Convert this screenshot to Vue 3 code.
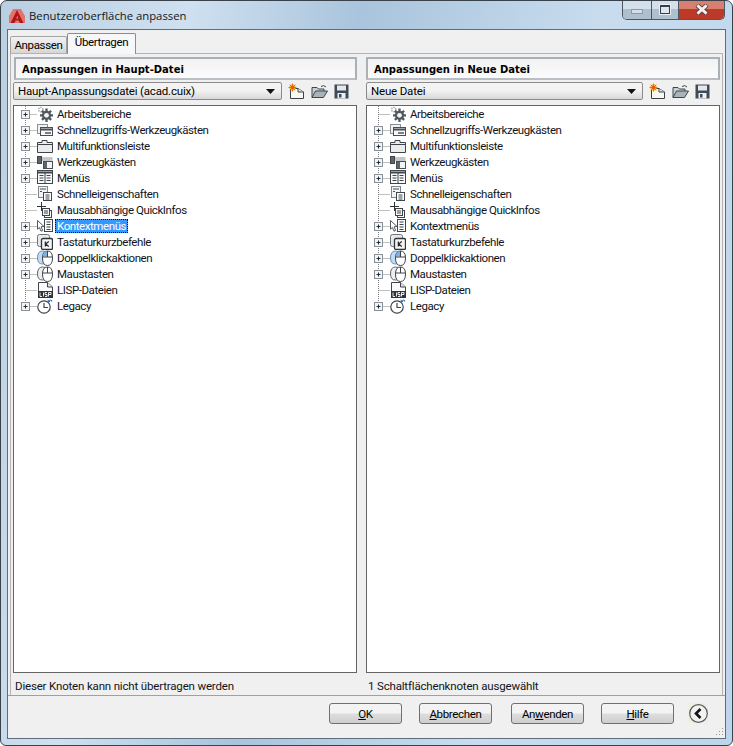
<script setup>
const items = [
  { t: 'Arbeitsbereiche', i: 'gear', x: true },
  { t: 'Schnellzugriffs-Werkzeugkästen', i: 'quick', x: true },
  { t: 'Multifunktionsleiste', i: 'ribbon', x: true },
  { t: 'Werkzeugkästen', i: 'tools', x: true },
  { t: 'Menüs', i: 'menu', x: true },
  { t: 'Schnelleigenschaften', i: 'props', x: false },
  { t: 'Mausabhängige QuickInfos', i: 'tip', x: false },
  { t: 'Kontextmenüs', i: 'context', x: true },
  { t: 'Tastaturkurzbefehle', i: 'key', x: true },
  { t: 'Doppelklickaktionen', i: 'dbl', x: true },
  { t: 'Maustasten', i: 'mouse', x: true },
  { t: 'LISP-Dateien', i: 'lisp', x: false },
  { t: 'Legacy', i: 'legacy', x: true }
]
const panels = [
  { title: 'Anpassungen in Haupt-Datei', combo: 'Haupt-Anpassungsdatei (acad.cuix)', status: 'Dieser Knoten kann nicht übertragen werden', sel: 'Kontextmenüs', noExpand: [], cls: 'left' },
  { title: 'Anpassungen in Neue Datei', combo: 'Neue Datei', status: '1 Schaltflächenknoten ausgewählt', sel: '', noExpand: ['Arbeitsbereiche'], cls: 'right' }
]
function hasBox(p, it) {
  return it.x && !p.noExpand.includes(it.t)
}
</script>

<template>
  <div class="window">
    <header class="titlebar">
      <svg class="logo" width="16" height="16" viewBox="0 0 16 16">
        <path d="M0 15 L0 8 L4 1 H12 L16 8 V15 Z" fill="#e2746f" />
        <path d="M1.5 15 L8 2 L14.5 15 L10.8 15 L9.8 12.5 L6.6 12.5 L5.5 15 Z" fill="#b01818" />
        <path d="M7.4 10.5 L9.2 10.5 L8.3 7.8 Z" fill="#e9a0a0" />
      </svg>
      <span class="title-text">Benutzeroberfläche anpassen</span>
      <div class="caption-btns">
        <div class="cap cap-min"><span class="min-glyph"></span></div>
        <div class="cap cap-max"><span class="max-glyph"></span></div>
        <div class="cap cap-close">
          <svg width="14" height="11" viewBox="0 0 14 11">
            <path d="M2 1 L12 10 M12 1 L2 10" stroke="#56393a" stroke-width="4.4" />
            <path d="M2.4 1.4 L11.6 9.6 M11.6 1.4 L2.4 9.6" stroke="#f4eeee" stroke-width="2.8" />
          </svg>
        </div>
      </div>
    </header>

    <div class="client">
      <div class="tabs">
        <div class="tab">Anpassen</div>
        <div class="tab active">Übertragen</div>
      </div>
      <div class="pane">
        <section v-for="p in panels" :key="p.cls" class="col">
          <div class="head">{{ p.title }}</div>
          <div class="toolbar">
            <div class="combo" :class="p.cls">
              <span>{{ p.combo }}</span>
              <svg class="arrow" width="9" height="5" viewBox="0 0 9 5"><path d="M0 0 H9 L4.5 5 Z" fill="#111" /></svg>
            </div>
            <svg class="tb" width="17" height="17" viewBox="0 0 17 17">
              <path d="M2.5 5.5 H10 L15.5 9 V15.5 H2.5 Z" fill="#fbf8ee" stroke="#39424c" />
              <path d="M10 5.5 V9 H15.5" fill="#dfe3e6" stroke="#39424c" />
              <circle cx="4.5" cy="4.5" r="3.2" fill="#f3b51c" />
              <circle cx="4.5" cy="4.5" r="1.5" fill="#e43a12" />
              <path d="M4.5 .5 V8.5 M.5 4.5 H8.5 M1.7 1.7 L7.3 7.3 M7.3 1.7 L1.7 7.3" stroke="#e8590f" stroke-width=".8" />
            </svg>
            <svg class="tb" width="17" height="17" viewBox="0 0 17 17">
              <path d="M1 14.5 V4.5 H6 L7.5 6 H13 V8" fill="#c8ced2" stroke="#3d464e" />
              <path d="M1 14.5 L4.5 8 H16.5 L12.5 14.5 Z" fill="#a9b4ba" stroke="#3d464e" />
              <path d="M10 3.5 Q13 1.5 15 4" fill="none" stroke="#3d464e" />
            </svg>
            <svg class="tb" width="15" height="15" viewBox="0 0 15 15">
              <path d="M.5 .5 H14.5 V14.5 H.5 Z" fill="#3e4a57" />
              <rect x="3" y="1.5" width="9" height="5" fill="#e4e8ea" />
              <rect x="3.5" y="9" width="8" height="5.5" fill="#eef0f1" />
              <rect x="5" y="10" width="2.5" height="3.5" fill="#3e4a57" />
            </svg>
          </div>
          <div class="tree">
            <div v-for="(it, n) in items" :key="it.t" class="row">
              <svg class="gutter" width="23" height="16" viewBox="0 0 23 16">
                <path :d="n === items.length - 1 ? 'M11.5 0 V8' : 'M11.5 0 V16'" stroke="#808080" stroke-dasharray="1 1" fill="none" />
                <path d="M11.5 8.5 H23" stroke="#808080" stroke-dasharray="1 1" fill="none" />
                <template v-if="hasBox(p, it)">
                  <rect x="7.5" y="4.5" width="8" height="8" fill="#f4f4f0" stroke="#8a9099" />
                  <path d="M9.5 8.5 H13.5 M11.5 6.5 V10.5" stroke="#1f2a44" />
                </template>
              </svg>
              <svg class="ico" width="16" height="16" viewBox="0 0 16 16">
                <template v-if="it.i === 'gear'">
                  <circle cx="3.8" cy="3.6" r="2.2" fill="none" stroke="#a2a7ac" stroke-width="1.4" stroke-dasharray="1.4 .8" />
                  <path d="M9.5 2.6 V15.9 M3 9.3 H16 M4.9 4.7 L14.1 13.9 M14.1 4.7 L4.9 13.9" stroke="#50585f" stroke-width="2.3" />
                  <circle cx="9.5" cy="9.3" r="4.6" fill="#50585f" />
                  <circle cx="9.5" cy="9.3" r="2.4" fill="#f4f4f4" />
                </template>
                <template v-else-if="it.i === 'quick'">
                  <rect x=".5" y="2.5" width="10" height="9" fill="#f2f2f2" stroke="#8b9095" />
                  <rect x="3.5" y="5.5" width="12" height="8" fill="#f7f7f7" stroke="#4a4f55" />
                  <path d="M4 7.5 H15" stroke="#4a4f55" stroke-width="2" />
                  <rect x="8" y="10" width="6" height="2" fill="#77808a" />
                </template>
                <template v-else-if="it.i === 'ribbon'">
                  <path d="M.5 14.5 V4.5 H5 V2.5 H10 V4.5 H15.5 V14.5 Z" fill="#ececec" stroke="#3f454b" />
                  <path d="M1 6.5 H15" stroke="#3f454b" />
                </template>
                <template v-else-if="it.i === 'tools'">
                  <rect x=".5" y="2.5" width="4" height="7" fill="#5d646b" stroke="#3f454b" />
                  <path d="M5 4 H15.5 M5 6 H15.5" stroke="#8a9095" />
                  <rect x="6.5" y="7.5" width="9" height="7" fill="#f3f3f3" stroke="#4a4f55" />
                  <rect x="7" y="8" width="3" height="6" fill="#5d646b" />
                </template>
                <template v-else-if="it.i === 'menu'">
                  <rect x=".5" y=".5" width="15" height="13" fill="#fafafa" stroke="#3f454b" />
                  <path d="M1 2.5 H15" stroke="#3f454b" stroke-width="2" />
                  <path d="M2.5 5.5 H6.5 M2.5 8 H6.5 M2.5 10.5 H6.5 M9.5 5.5 H13.5 M9.5 8 H13.5 M9.5 10.5 H13.5 M8 3 V13.5" stroke="#3f454b" />
                </template>
                <template v-else-if="it.i === 'props'">
                  <rect x="1.5" y=".5" width="9" height="11" fill="#f3f3f3" stroke="#7e858c" />
                  <path d="M3 3 H9 M3 5.5 H5" stroke="#4a4f55" />
                  <rect x="6.5" y="6.5" width="8" height="8" fill="#fff" stroke="#3f454b" />
                  <path d="M8.5 9 H12.5 M8.5 11 H12.5 M8.5 13 H12.5" stroke="#3f454b" />
                </template>
                <template v-else-if="it.i === 'tip'">
                  <path d="M4.5 0 V9 M0 4.5 H9" stroke="#2d3238" />
                  <rect x="7.5" y="8.5" width="7" height="7" fill="#fff" stroke="#3f454b" />
                  <rect x="5.5" y="6.5" width="7" height="7" fill="#f6f6f6" stroke="#3f454b" />
                  <path d="M7 9 H11 M7 11 H11" stroke="#3f454b" />
                </template>
                <template v-else-if="it.i === 'context'">
                  <path d="M.5 2.5 L7 8.5 L4 8.8 L5.7 12.5 L4 13.2 L2.4 9.5 L.5 11.2 Z" fill="#fff" stroke="#3f454b" stroke-width=".9" />
                  <rect x="7.5" y="1.5" width="8" height="12" fill="#fafafa" stroke="#3f454b" />
                  <path d="M9.5 4 H13.5 M9.5 6.5 H13.5 M9.5 9 H13.5 M9.5 11.5 H13.5" stroke="#3f454b" />
                </template>
                <template v-else-if="it.i === 'key'">
                  <rect x=".5" y=".5" width="12" height="12" rx="2" fill="#e8e8e8" stroke="#6d737a" />
                  <rect x="4.5" y="4.5" width="11" height="11" rx="1.5" fill="#f4f4f4" stroke="#2f343a" stroke-width="1.3" />
                  <path d="M8.3 7.5 V12.5 M11.8 7.5 L8.6 10 L11.8 12.5" fill="none" stroke="#20252a" stroke-width="1.2" />
                </template>
                <template v-else-if="it.i === 'dbl'">
                  <path d="M.5 8 Q.5 1 5.5 1 Q10.5 1 10.5 8 Q10.5 14 5.5 14 Q.5 14 .5 8 Z" fill="#c2daf3" stroke="#6d8fb5" />
                  <path d="M5.5 8 Q5.5 1 10.5 1 Q15.5 1 15.5 8 Q15.5 15.5 10.5 15.5 Q5.5 15.5 5.5 8 Z" fill="#fff" stroke="#3f454b" />
                  <path d="M6 6.5 Q6 1.5 10 1.5 V6.5 Z" fill="#7cb1e6" />
                  <path d="M5.5 7 H15.5 M10.5 1 V7" stroke="#3f454b" />
                </template>
                <template v-else-if="it.i === 'mouse'">
                  <path d="M.5 8 Q.5 1 5.5 1 Q10.5 1 10.5 8 Q10.5 14 5.5 14 Q.5 14 .5 8 Z" fill="#eee" stroke="#5f656b" />
                  <path d="M5.5 8 Q5.5 1 10.5 1 Q15.5 1 15.5 8 Q15.5 15.5 10.5 15.5 Q5.5 15.5 5.5 8 Z" fill="#fff" stroke="#3f454b" />
                  <path d="M5.5 7 H15.5 M10.5 1 V7" stroke="#3f454b" />
                </template>
                <template v-else-if="it.i === 'lisp'">
                  <path d="M1.5 .5 H10.5 L15.5 5 V15.5 H1.5 Z" fill="#fbfbfb" stroke="#3f454b" />
                  <path d="M10.5 .5 V5 H15.5" fill="#e3e3e3" stroke="#3f454b" />
                  <rect x="1" y="9" width="15" height="7" fill="#2e343a" />
                  <path d="M3 10.5 V14.5 H5 M6.5 10.5 V14.5 M10 10.5 H8 V12.5 H10 V14.5 H8 M11.5 14.5 V10.5 H14 V12.5 H11.5" fill="none" stroke="#fff" stroke-width=".9" />
                </template>
                <template v-else>
                  <circle cx="7" cy="9" r="6.2" fill="#fff" stroke="#3f454b" stroke-width="1.2" />
                  <path d="M7 5 V9.5 H11" fill="none" stroke="#3f454b" stroke-width="1.2" />
                  <path d="M11.5 3.5 Q14 .5 15 3.5" fill="none" stroke="#2f6fc4" stroke-width="1.1" />
                  <path d="M10.5 1.5 L11 4.5 L13.5 3.8 Z" fill="#2f6fc4" />
                </template>
              </svg>
              <span class="label" :class="{ sel: p.sel === it.t }">{{ it.t }}</span>
            </div>
          </div>
          <div class="status">{{ p.status }}</div>
        </section>
      </div>
      <footer class="footer">
        <button class="btn"><u>O</u>K</button>
        <button class="btn"><u>A</u>bbrechen</button>
        <button class="btn btn-wide">An<u>w</u>enden</button>
        <button class="btn"><u>H</u>ilfe</button>
        <div class="chev">
          <svg width="19" height="19" viewBox="0 0 19 19">
            <circle cx="9.5" cy="9.5" r="8.8" fill="#f2f2f2" stroke="#56595d" stroke-width="1.2" />
            <path d="M11.5 5 L7 9.5 L11.5 14" fill="none" stroke="#161616" stroke-width="2.6" />
          </svg>
        </div>
      </footer>
      <svg class="grip" width="10" height="10" viewBox="0 0 10 10">
        <path d="M8 1h1v1h-1zM5 4h1v1h-1zM8 4h1v1h-1zM2 7h1v1h-1zM5 7h1v1h-1zM8 7h1v1h-1z" fill="#9a9a9a" />
      </svg>
    </div>
  </div>
</template>

<style>
html, body { margin: 0; background: #fff; }
</style>

<style scoped>
.window {
  width: 733px;
  height: 746px;
  box-sizing: border-box;
  border: 1px solid #39424b;
  border-radius: 7px 7px 6px 6px;
  padding: 0 6px 6px;
  background: linear-gradient(100deg, #b9cfe2 0%, #cfe0f0 22%, #a9c4dc 42%, #c8dcee 70%, #bdd5ea 100%);
  display: flex;
  flex-direction: column;
  font-family: Roboto, "Liberation Sans", Arial, sans-serif;
  font-size: 11.5px;
  color: #000;
  overflow: hidden;
}
.titlebar {
  height: 28px;
  flex: none;
  display: flex;
  align-items: flex-start;
}
.logo { margin: 7px 0 0 2px; }
.title-text {
  margin: 7px 0 0 4px;
  font-family: "Open Sans", "Liberation Sans", sans-serif;
  font-size: 11.3px;
  line-height: 16px;
  color: #101820;
}
.caption-btns {
  margin-left: auto;
  display: flex;
  height: 19px;
  margin-right: 1px;
  margin-top: -1px;
  border: 1px solid #4b5661;
  border-top: none;
  border-radius: 0 0 5px 5px;
  overflow: hidden;
}
.cap {
  display: flex;
  align-items: center;
  justify-content: center;
  height: 100%;
}
.cap-min { width: 28px; background: linear-gradient(#d3dfea 0 50%, #aebfce 50% 100%); border-right: 1px solid #4b5661; }
.cap-max { width: 26px; background: linear-gradient(#d3dfea 0 50%, #aebfce 50% 100%); border-right: 1px solid #4b5661; }
.cap-close { flex: 1; width: 45px; background: linear-gradient(#d88070 0 45%, #bd3a28 45% 100%); }
.min-glyph { width: 10px; height: 3px; background: #d5dee6; border: 1px solid #8b9aa8; margin-top: 3px; }
.max-glyph { width: 8px; height: 6px; border: 1px solid #34404c; border-top-width: 2px; background: #dde6ee; outline: 1px solid #e8eef3; }

.client {
  position: relative;
  flex: 1;
  min-height: 0;
  background: #f0f0f0;
  border: 1px solid #5d6d7c;
  display: flex;
  flex-direction: column;
  padding-top: 3px;
}
.tabs {
  height: 20px;
  flex: none;
  display: flex;
  align-items: flex-end;
  padding-left: 2px;
}
.tab {
  width: 57px;
  height: 17px;
  box-sizing: border-box;
  border: 1px solid #a3a3a3;
  border-bottom: none;
  border-radius: 2px 2px 0 0;
  background: linear-gradient(#f2f2f2, #d6d6d6);
  text-align: center;
  line-height: 16px;
  letter-spacing: -0.33px;
}
.tab.active {
  width: 69px;
  height: 21px;
  background: #f7f7f7;
  border-color: #8c8c8c;
  margin-bottom: -1px;
  position: relative;
  line-height: 17px;
  z-index: 1;
}
.pane {
  flex: none;
  width: 713px;
  height: 642px;
  box-sizing: border-box;
  margin-left: 2px;
  border: 1px solid #b4b4b4;
  border-bottom: none;
  padding: 3px 2px 0;
  display: grid;
  grid-template-columns: 344px 354px;
  column-gap: 9px;
  background: #f0f0f0;
}
.col {
  display: flex;
  flex-direction: column;
  min-height: 0;
}
.head {
  height: 23px;
  box-sizing: border-box;
  flex: none;
  margin-left: 1px;
  border: 2px solid #a9b0b6;
  border-bottom-color: #b8bec3;
  background: linear-gradient(#f2f2f2, #fbfbfb);
  font-family: "DejaVu Sans", sans-serif;
  font-weight: 700;
  font-size: 10px;
  line-height: 21px;
  padding-left: 6px;
}
.col:last-child .head { margin-left: 0; }
.toolbar {
  height: 18px;
  flex: none;
  margin-top: 2px;
  display: flex;
  align-items: center;
}
.combo {
  height: 18px;
  box-sizing: border-box;
  border: 1px solid #8b8b8b;
  border-radius: 2px;
  background: linear-gradient(#f3f3f3 0 45%, #d8d8d8 100%);
  padding: 0 6px 0 4px;
  display: flex;
  align-items: center;
  justify-content: space-between;
  line-height: 16px;
  letter-spacing: -0.18px;
}
.combo.left { width: 269px; }
.combo.right { width: 277px; }
.arrow { flex: none; }
.tb { flex: none; margin-left: 6px; }
.tree {
  margin-top: 5px;
  height: 568px;
  flex: none;
  box-sizing: border-box;
  border: 1px solid #646464;
  background: #fff;
}
.row {
  height: 16px;
  display: flex;
  align-items: center;
}
.gutter, .ico { flex: none; display: block; }
.ico { margin-right: 2px; }
.label {
  padding: 0 2px;
  line-height: 14px;
  white-space: nowrap;
  box-sizing: border-box;
  color: #10141a;
  letter-spacing: -0.42px;
}
.label.sel {
  background: #3399ff;
  color: #fff;
  outline: 1px dotted #111;
  outline-offset: -1px;
}
.status {
  flex: 1;
  padding: 6px 0 0 2px;
  line-height: 14px;
  color: #10141a;
  letter-spacing: -0.17px;
}
.footer {
  flex: 1;
  border-top: 1px solid #a0a0a0;
  display: flex;
  align-items: flex-start;
  padding: 7px 0 0 321px;
}
.btn {
  width: 73px;
  height: 21px;
  box-sizing: border-box;
  border: 1px solid #707070;
  border-radius: 3px;
  background: linear-gradient(#f3f3f3 0 45%, #dcdcdc 55%, #cfcfcf 100%);
  font: inherit;
  letter-spacing: -0.33px;
  color: #000;
  padding: 0;
  margin-right: 17px;
}
.btn-wide { margin-left: 2px; }
.btn:nth-of-type(4) { margin-right: 14px; }
.chev {
  width: 20px;
  height: 20px;
  background: #efeee0;
  display: flex;
  align-items: center;
  justify-content: center;
}
.grip { position: absolute; right: 1px; bottom: 1px; }
</style>
